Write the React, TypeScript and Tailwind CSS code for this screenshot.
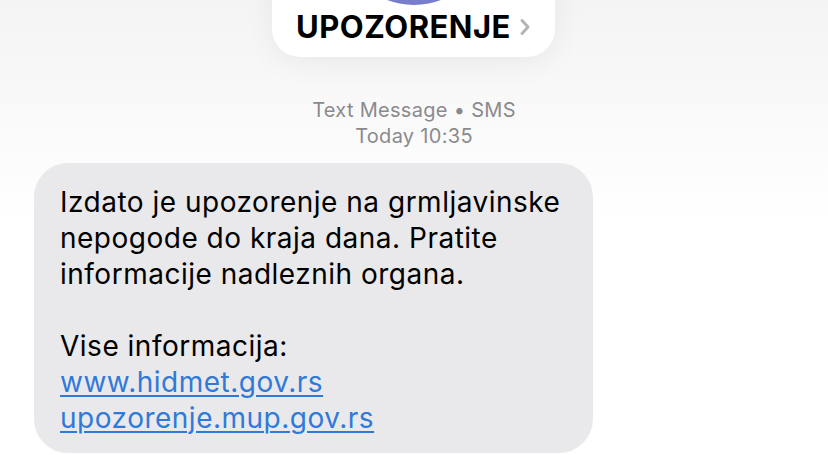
import "react";

function Chevron() {
  return (
    <svg width="12" height="18" viewBox="0 0 12 18" fill="none">
      <path
        d="M3 2.5 L9 9 L3 15.5"
        stroke="#b4b4b8"
        strokeWidth="3"
        strokeLinecap="round"
        strokeLinejoin="round"
      />
    </svg>
  );
}

export default function App() {
  const font = { fontFamily: "Inter, 'Noto Sans', sans-serif" };
  return (
    <div
      style={font}
      className="w-[828px] h-[455px] overflow-hidden bg-white flex flex-col bg-gradient-to-b from-[#f4f4f5] via-white to-white"
    >
      {/* contact header */}
      <div className="flex justify-center">
        <div className="w-[283px] mt-[-145px] ml-[-1px] pb-[11px] rounded-[28px] bg-white shadow-[0_6px_30px_rgba(0,0,0,0.06)] flex flex-col items-center">
          <div className="w-[150px] h-[150px] rounded-full bg-gradient-to-b from-[#9a9fe0] to-[#767dcd]" />
          <div className="mt-[3px] h-[38px] flex items-center gap-[8px]">
            <span className="text-[31px] leading-[38px] font-bold text-black tracking-[0.5px]">
              UPOZORENJE
            </span>
            <Chevron />
          </div>
        </div>
      </div>

      {/* meta */}
      <div className="mt-[40px] flex flex-col items-center text-[20px] leading-[26px] tracking-[0.3px] text-[#8a8a8e]">
        <span>Text Message • SMS</span>
        <span>Today 10:35</span>
      </div>

      {/* bubble */}
      <div className="mt-[14px] ml-[34px] w-[559px] rounded-[34px] bg-[#e9e9eb] pl-[26px] pt-[21px] pb-[17px] text-[28px] leading-[36px] tracking-[0.5px] text-black">
        <p>
          Izdato je upozorenje na grmljavinske
          <br />
          nepogode do kraja dana. Pratite
          <br />
          informacije nadleznih organa.
        </p>
        <p className="mt-[36px]">Vise informacija:</p>
        <a href="#" className="block text-[#2f7ad9] underline underline-offset-[3px] decoration-[1.5px]">
          www.hidmet.gov.rs
        </a>
        <a href="#" className="block text-[#2f7ad9] underline underline-offset-[3px] decoration-[1.5px]">
          upozorenje.mup.gov.rs
        </a>
      </div>
    </div>
  );
}
